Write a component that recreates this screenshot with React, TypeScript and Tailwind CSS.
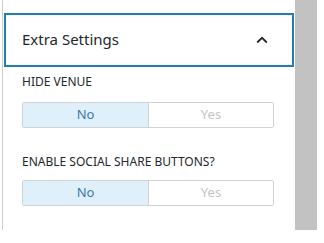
import React from "react";

function Toggle() {
  return (
    <div className="flex h-[26px] w-[252px] rounded-[2px] border border-[#cfd3d6] text-[13px] overflow-hidden">
      <div className="flex w-[126px] items-center justify-center border-r border-[#cfd3d6] bg-[#dff0fb] text-[#3b7aa8]">No</div>
      <div className="flex flex-1 items-center justify-center bg-white text-[#c3c4c7]">Yes</div>
    </div>
  );
}

export default function App() {
  return (
    <div className="relative h-[243px] w-[324px] bg-white" style={{ fontFamily: '"Noto Sans", "Open Sans", sans-serif' }}>
      <div className="flex h-[230px]">
        <div className="w-[2px]" />
        <div className="w-[1px] bg-[#cdcdcd]" />
        <div className="w-[1px]" />
        <div className="w-[290px] pt-[13px]">
          <div className="flex h-[54px] items-center justify-between border-2 border-[#1f7db8] pb-[1px] pl-[16px] pr-[24px]">
            <span className="text-[15px] text-[#23282d]">Extra Settings</span>
            <svg width="12" height="8" viewBox="0 0 12 8" fill="none">
              <path d="M1.2 6.5 L6 1.8 L10.8 6.5" stroke="#23282d" strokeWidth="1.8" />
            </svg>
          </div>
          <div className="pl-[18px] pt-[7px]">
            <div className="text-[12px] leading-[16px] text-[#23282d]">HIDE VENUE</div>
            <div className="mt-[12px]"><Toggle /></div>
            <div className="mt-[26px] text-[12px] leading-[16px] text-[#23282d]">ENABLE SOCIAL SHARE BUTTONS?</div>
            <div className="mt-[10px]"><Toggle /></div>
          </div>
        </div>
        <div className="w-[1px]" />
        <div className="w-[22px] bg-[#c2c2c2]" />
      </div>
    </div>
  );
}
